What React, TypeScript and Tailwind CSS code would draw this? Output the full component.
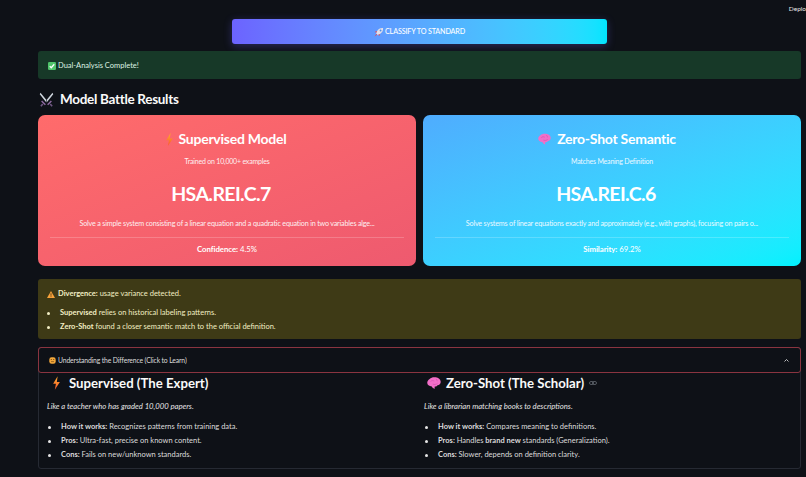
const sans = "font-['Lato','Noto_Sans',sans-serif]";

function Bolt({ className }: { className: string }) {
  return (
    <svg viewBox="0 0 16 24" className={className}>
      <defs>
        <linearGradient id="bolt" x1="0" y1="0" x2="0" y2="1">
          <stop offset="0" stopColor="#ffb02e" />
          <stop offset="1" stopColor="#f8562c" />
        </linearGradient>
      </defs>
      <path d="M10 0 2 13.5h5L5 24l9-14H8.6L10 0Z" fill="url(#bolt)" />
    </svg>
  );
}

function Brain({ className }: { className: string }) {
  return (
    <svg viewBox="0 0 24 20" className={className}>
      <path
        d="M4.500 3C7 .5 11-.3 15 .3c4.500.7 8.300 3.500 8.500 7.500.2 3.500-2.300 6-5.500 6.200-1 1.800-3 2.500-4.700 2-.3 1.500-.3 2.800.2 4-2.500-.3-4.300-1.800-5.200-4C3.500 15.500.4 13 .4 9.500.4 7 2 4.500 4.500 3Z"
        fill="#f26fc8"
      />
      <path d="M6 7.500c2-2 4.500-2 6.500-.8M10 12c2.500 1 6 .8 8-1.500M15.500 3c1.200 1 2 2.300 2 4" fill="none" stroke="#cf4aa8" strokeWidth="1" />
    </svg>
  );
}

function Rocket() {
  return (
    <svg viewBox="0 0 16 16" className="h-[10px] w-[10px] shrink-0">
      <path d="M14.500 1.500c-4-.5-7.500 1.500-9.500 5l-2 3 3.500 3.500 3-2c3.500-2 5.500-5.500 5-9.500Z" fill="#e3dfe8" />
      <circle cx="10.500" cy="5.500" r="1.500" fill="#4b8fe8" />
      <path d="M5 6.500 1.500 7.500 3.500 9.500ZM9.500 11l-1 3.500-2-2Z" fill="#e5484d" />
      <path d="M3.500 11 1 15l4-2.500Z" fill="#e5484d" />
    </svg>
  );
}

function Check() {
  return (
    <svg viewBox="0 0 16 16" className="h-[8px] w-[8px] shrink-0">
      <rect width="16" height="16" rx="2.500" fill="#4fc46a" />
      <path d="m3.500 8.500 3 3 6-7" fill="none" stroke="#fff" strokeWidth="2.500" />
    </svg>
  );
}

function Swords() {
  return (
    <svg viewBox="0 0 20 20" className="h-[15px] w-[15px] shrink-0">
      <path d="M2 1 11 12l-1.500 1.500L1 3ZM18 1 9 12l1.500 1.500L19 3Z" fill="#cfd6de" />
      <path d="m3.500 12 5 5M16.500 12l-5 5" stroke="#8d6aa0" strokeWidth="2" />
      <path d="m5 16-2.500 3M15 16l2.500 3" stroke="#6d5680" strokeWidth="2.200" />
    </svg>
  );
}

function Warning() {
  return (
    <svg viewBox="0 0 16 14" className="h-[7px] w-[8px] shrink-0">
      <path d="M8 0 16 14H0Z" fill="#f7a23b" />
      <rect x="7.200" y="4.500" width="1.600" height="5" fill="#3a3413" />
      <rect x="7.200" y="10.600" width="1.600" height="1.600" fill="#3a3413" />
    </svg>
  );
}

function Thinking() {
  return (
    <svg viewBox="0 0 12 12" className="h-[7px] w-[7px] shrink-0">
      <rect x=".5" y=".5" width="11" height="11" rx="4" fill="#f3a83b" />
      <rect x="3" y="3.500" width="2" height="1.500" fill="#7a4a12" />
      <rect x="7" y="3.500" width="2" height="1.500" fill="#7a4a12" />
      <rect x="3.500" y="7.500" width="5" height="1.200" fill="#7a4a12" />
    </svg>
  );
}

function ResultCard({
  icon,
  title,
  titleClass,
  sub,
  code,
  desc,
  label,
  value,
  gradient,
}: {
  icon: React.ReactNode;
  title: string;
  titleClass: string;
  sub: string;
  code: string;
  desc: string;
  label: string;
  value: string;
  gradient: string;
}) {
  return (
    <div className={`flex h-[151px] flex-col items-center rounded-[7px] px-[12px] text-white ${gradient}`}>
      <div className={`mt-[14px] flex h-[20px] items-center text-[14px] font-bold leading-[20px] tracking-[-0.25px] ${titleClass}`}>
        {icon}
        <span>{title}</span>
      </div>
      <div className="mt-[6px] text-[7px] leading-[12px] tracking-[-0.2px] opacity-90">{sub}</div>
      <div className="mr-[12px] mt-[12px] text-[19.500px] font-bold leading-[30px] tracking-[-0.6px]">{code}</div>
      <div className="mt-[9px] text-[7.200px] leading-[12px] tracking-[-0.19px] opacity-90">{desc}</div>
      <div className="mt-[7px] h-px w-full bg-white/20" />
      <div className="mt-[5px] text-[7.800px] leading-[12px] tracking-[-0.05px]">
        <b>{label}:</b> {value}
      </div>
    </div>
  );
}

function Explainer({
  icon,
  title,
  quote,
  items,
  link,
}: {
  icon: React.ReactNode;
  title: string;
  quote: string;
  items: React.ReactNode[];
  link?: boolean;
}) {
  return (
    <div>
      <div className="flex h-[20px] items-center text-[13.200px] font-bold leading-[20px] text-[#fafafa]">
        {icon}
        <span>{title}</span>
        {link && (
          <svg viewBox="0 0 16 8" className="ml-[5px] h-[4px] w-[8px]" fill="none" stroke="#6b7078" strokeWidth="1.500">
            <rect x="1" y="1" width="8" height="6" rx="3" />
            <rect x="7" y="1" width="8" height="6" rx="3" />
          </svg>
        )}
      </div>
      <p className="mt-[7px] text-[7.700px] italic leading-[12px] text-[#e6e6e6]">{quote}</p>
      <ul className="mt-[9px] flex flex-col gap-[2px] text-[7.500px] leading-[12px] text-[#dcdcdc]">
        {items.map((it, i) => (
          <li key={i} className="flex items-center">
            <span className="ml-[1px] mr-[10px] h-[3px] w-[3px] rounded-full bg-[#e6e6e6]" />
            <span>{it}</span>
          </li>
        ))}
      </ul>
    </div>
  );
}

export default function App() {
  return (
    <div className={`relative h-[477px] w-[806px] overflow-hidden bg-[#0e1117] ${sans}`}>
      <div className="absolute right-0 top-[5px] text-[6.500px] leading-[8px] text-[#e6e6e6]">Deplo</div>

      <div className="ml-[38px] w-[763px] pt-[19px]">
        <div className="mx-auto flex h-[25px] w-[375px] items-center justify-center gap-[1px] rounded-[3px] bg-gradient-to-r from-[#6c63ff] to-[#00e5ff] pt-[1px] text-[7.200px] font-medium tracking-[-0.15px] text-white shadow-[0_2px_8px_rgba(108,99,255,0.3)]">
          <Rocket />
          CLASSIFY TO STANDARD
        </div>

        <div className="mt-[7px] flex h-[28px] items-center gap-[2px] rounded-[3px] bg-[#173928] pl-[10px] pt-[1px] text-[7.500px] text-[#dff3e4]">
          <Check />
          Dual-Analysis Complete!
        </div>

        <div className="mt-[10px] flex h-[20px] items-center gap-[6px] pl-[1px] text-[13.500px] font-bold leading-[20px] tracking-[-0.3px] text-[#fafafa]">
          <Swords />
          Model Battle Results
        </div>

        <div className="mt-[6px] grid grid-cols-[378px_378px] gap-[7px]">
          <ResultCard
            icon={<Bolt className="mr-[5px] h-[13px] w-[9px]" />}
            title="Supervised Model"
            titleClass="mr-[3px]"
            sub="Trained on 10,000+ examples"
            code="HSA.REI.C.7"
            desc="Solve a simple system consisting of a linear equation and a quadratic equation in two variables alge..."
            label="Confidence"
            value="4.5%"
            gradient="bg-gradient-to-br from-[#ff6b6b] to-[#ee5a6f]"
          />
          <ResultCard
            icon={<Brain className="mr-[6px] h-[12px] w-[13px]" />}
            title="Zero-Shot Semantic"
            titleClass="mr-[10px]"
            sub="Matches Meaning Definition"
            code="HSA.REI.C.6"
            desc="Solve systems of linear equations exactly and approximately (e.g., with graphs), focusing on pairs o..."
            label="Similarity"
            value="69.2%"
            gradient="bg-gradient-to-br from-[#4facfe] to-[#00f2fe]"
          />
        </div>

        <div className="mt-[13px] h-[60px] rounded-[3px] bg-[#3e3a16] pl-[9px] pt-[9px] text-[7.500px] leading-[12px] text-[#f2eec4]">
          <div className="flex items-center gap-[3px]">
            <Warning />
            <span>
              <b>Divergence:</b> usage variance detected.
            </span>
          </div>
          <ul className="mt-[7px] flex flex-col gap-[2px] leading-[12px]">
            <li className="flex items-center">
              <span className="mr-[10px] h-[3px] w-[3px] rounded-full bg-[#f2eec4]" />
              <span>
                <b>Supervised</b> relies on historical labeling patterns.
              </span>
            </li>
            <li className="flex items-center">
              <span className="mr-[10px] h-[3px] w-[3px] rounded-full bg-[#f2eec4]" />
              <span>
                <b>Zero-Shot</b> found a closer semantic match to the official definition.
              </span>
            </li>
          </ul>
        </div>

        <div className="mt-[8px] h-[122px] rounded-[3px] border border-[#262a33]">
          <div className="-mx-px -mt-px flex h-[26px] items-center justify-between rounded-[3px] border border-[#8a3440] pl-[10px] pr-[11px] text-[6.800px] tracking-[-0.13px] text-[#dcdcdc]">
            <div className="flex items-center gap-[2px]">
              <Thinking />
              Understanding the Difference (Click to Learn)
            </div>
            <svg viewBox="0 0 10 6" className="h-[3px] w-[5px]" fill="none" stroke="#e6e6e6" strokeWidth="1.600">
              <path d="m1 5 4-4 4 4" />
            </svg>
          </div>
          <div className="grid grid-cols-[377px_1fr] pl-[8px]">
            <Explainer
              icon={<Bolt className="ml-[5px] mr-[8px] h-[14px] w-[9px]" />}
              title="Supervised (The Expert)"
              quote="Like a teacher who has graded 10,000 papers."
              items={[
                <>
                  <b>How it works:</b> Recognizes patterns from training data.
                </>,
                <>
                  <b>Pros:</b> Ultra-fast, precise on known content.
                </>,
                <>
                  <b>Cons:</b> Fails on new/unknown standards.
                </>,
              ]}
            />
            <Explainer
              icon={<Brain className="ml-[3px] mr-[5px] h-[12px] w-[14px]" />}
              title="Zero-Shot (The Scholar)"
              link
              quote="Like a librarian matching books to descriptions."
              items={[
                <>
                  <b>How it works:</b> Compares meaning to definitions.
                </>,
                <>
                  <b>Pros:</b> Handles <b>brand new</b> standards (Generalization).
                </>,
                <>
                  <b>Cons:</b> Slower, depends on definition clarity.
                </>,
              ]}
            />
          </div>
        </div>
      </div>
    </div>
  );
}
